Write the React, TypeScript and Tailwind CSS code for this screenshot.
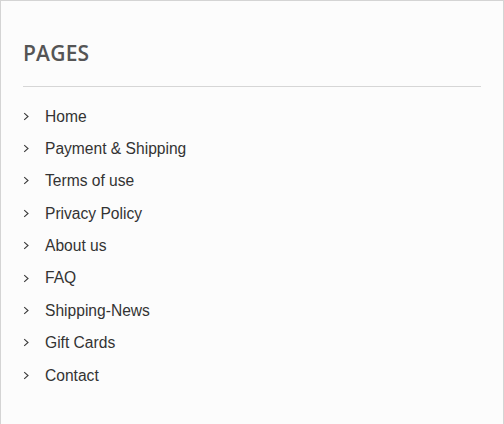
import React from 'react';

const pages = [
  'Home',
  'Payment & Shipping',
  'Terms of use',
  'Privacy Policy',
  'About us',
  'FAQ',
  'Shipping-News',
  'Gift Cards',
  'Contact',
];

function Chevron() {
  return (
    <svg width="7" height="9" viewBox="0 0 7 9" className="shrink-0">
      <path d="M1.2 1.2L5 4.5L1.2 7.8" fill="none" stroke="#3a3a3a" strokeWidth="1.1" />
    </svg>
  );
}

export default function App() {
  return (
    <div className="w-[504px] h-[424px] bg-[#fcfcfc] border-l border-t border-r border-[#d4d4d4] pl-[22px] pr-[22px] pt-[38px]">
      <h2
        className="text-[21px] leading-[28px] font-semibold text-[#555] tracking-[0.2px]"
        style={{ fontFamily: '"Open Sans", sans-serif' }}
      >
        PAGES
      </h2>
      <div className="mt-[19px] h-px bg-[#d6d6d6]" />
      <ul className="mt-[13px]" style={{ fontFamily: '"Liberation Sans", Arial, sans-serif' }}>
        {pages.map((page) => (
          <li key={page} className="flex items-center h-[32.4px] text-[15.6px] text-[#333]">
            <span className="w-[22px] flex items-center">
              <Chevron />
            </span>
            <span>{page}</span>
          </li>
        ))}
      </ul>
    </div>
  );
}
